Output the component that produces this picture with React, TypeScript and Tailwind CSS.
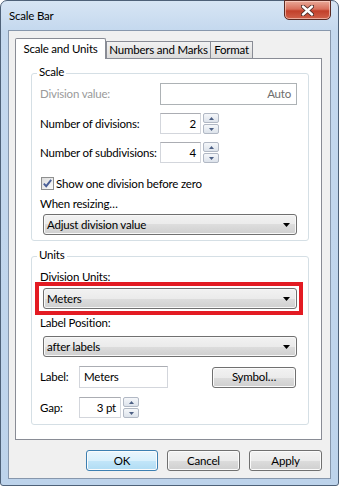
import React from "react";

const btnGrad =
  "bg-[linear-gradient(to_bottom,#f2f2f2_0%,#ebebeb_50%,#dddddd_50%,#cfcfcf_100%)]";

function Arrow() {
  return (
    <svg width="7" height="4" viewBox="0 0 7 4">
      <path d="M0 0 L7 0 L3.5 4 Z" fill="#000" />
    </svg>
  );
}

function Combo({ text }: { text: string }) {
  return (
    <div
      className={`h-[21px] w-[254px] rounded-[3px] border border-[#707070] ${btnGrad} shadow-[inset_0_0_0_1px_#f8f8f8] flex items-center justify-between pl-[3px] pr-[6px]`}
    >
      <span className="leading-[14px]">{text}</span>
      <Arrow />
    </div>
  );
}

function Spin() {
  const half =
    "h-[10px] w-[16px] border border-[#b1b8c4] rounded-[2px] bg-[linear-gradient(to_bottom,#f5f7fa,#dde3eb)] flex items-center justify-center";
  return (
    <div className="flex flex-col gap-[1px] ml-[2px] shrink-0">
      <div className={half}>
        <svg width="5" height="3" viewBox="0 0 5 3">
          <path d="M2.5 0 L5 3 L0 3 Z" fill="#4c5f84" />
        </svg>
      </div>
      <div className={half}>
        <svg width="5" height="3" viewBox="0 0 5 3">
          <path d="M0 0 L5 0 L2.5 3 Z" fill="#4c5f84" />
        </svg>
      </div>
    </div>
  );
}

const inputCls =
  "shrink-0 bg-white border border-[#d3d6dc] border-t-[#abadb3] flex items-center";

function Group({
  label,
  children,
}: {
  label: string;
  children: React.ReactNode;
}) {
  return (
    <div className="relative border border-[#d5dfe5] rounded-[3px] pl-[8px]">
      <span className="absolute -top-[9px] left-[5px] px-[2px] bg-white leading-[14px]">
        {label}
      </span>
      {children}
    </div>
  );
}

function Button({
  children,
  primary,
  w,
}: {
  children: React.ReactNode;
  primary?: boolean;
  w: string;
}) {
  const cls = primary
    ? "border-[#3c7fb1] bg-[linear-gradient(to_bottom,#eaf6fd_0%,#d9f0fc_50%,#c3e6f9_50%,#b0dcf4_100%)]"
    : `border-[#707070] ${btnGrad}`;
  return (
    <div
      className={`h-[21px] ${w} rounded-[3px] border ${cls} shadow-[inset_0_0_0_1px_#fbfbfb] flex items-center justify-center leading-[14px]`}
    >
      {children}
    </div>
  );
}

export default function App() {
  return (
    <div className="w-[339px] h-[486px] font-['Lato','Noto_Sans',sans-serif] text-[11.5px] tracking-[-0.2px] text-black whitespace-nowrap">
      <div className="w-[339px] h-[486px] flex flex-col border border-[#4e6178] rounded-t-[7px] rounded-b-[3px] bg-[linear-gradient(to_bottom,#d7e5f4_0px,#c4d8ee_30px,#bdd3eb_100%)] px-[7px] pb-[6px]">
        {/* title bar */}
        <div className="h-[29px] flex items-start justify-between">
          <div className="h-[29px] flex items-center pl-[1px] leading-[14px]">
            Scale Bar
          </div>
          <div className="-mt-px w-[47px] h-[20px] rounded-b-[5px] border border-[#5a2a22] bg-[linear-gradient(to_bottom,#e9a998_0%,#d8705c_45%,#c2402a_55%,#d0614a_100%)] shadow-[inset_0_0_0_1px_rgba(255,220,210,0.6)] flex items-center justify-center">
            <svg width="13" height="11" viewBox="0 0 13 11">
              <path
                d="M2 1.5 L11 9.5 M11 1.5 L2 9.5"
                stroke="#4a2a26"
                strokeWidth="4.2"
                strokeLinecap="round"
              />
              <path
                d="M2 1.5 L11 9.5 M11 1.5 L2 9.5"
                stroke="#ffffff"
                strokeWidth="2.4"
                strokeLinecap="round"
              />
            </svg>
          </div>
        </div>

        {/* client */}
        <div className="flex-1 border border-[#8797ac] bg-[#f0f0f0] pl-[6px] pr-[8px] pt-[7px] flex flex-col">
          {/* tabs */}
          <div className="relative z-10 h-[20px] flex items-end">
            <div className="-mb-px h-[21px] w-[91px] bg-white border border-b-0 border-[#898c95] rounded-t-[2px] flex items-center justify-center pb-[1px] leading-[14px]">
              Scale and Units
            </div>
            <div className="h-[17px] w-[105px] border border-b-0 border-[#898c95] bg-[linear-gradient(to_bottom,#f2f2f2,#dcdcdc)] flex items-center justify-center leading-[14px]">
              Numbers and Marks
            </div>
            <div className="-ml-px h-[17px] w-[43px] border border-b-0 border-[#898c95] bg-[linear-gradient(to_bottom,#f2f2f2,#dcdcdc)] flex items-center justify-center leading-[14px]">
              Format
            </div>
          </div>

          {/* panel */}
          <div className="h-[382px] w-[307px] bg-white border border-[#898c95] pl-[15px] pr-[12px] pt-[14px]">
            <Group label="Scale">
              <div className="mt-[9px] h-[22px] flex items-center">
                <span className="w-[120px] shrink-0 text-[#9a9a9a] leading-[14px]">
                  Division value:
                </span>
                <div className="shrink-0 h-[22px] w-[137px] bg-white border border-[#adb2b5] flex items-center justify-end pr-[5px] text-[#6d6d6d] leading-[14px]">
                  Auto
                </div>
              </div>
              <div className="mt-[8px] h-[21px] flex items-center">
                <span className="w-[120px] shrink-0 leading-[14px]">
                  Number of divisions:
                </span>
                <div
                  className={`${inputCls} h-[21px] w-[41px] justify-end pr-[4px] leading-[14px]`}
                >
                  2
                </div>
                <Spin />
              </div>
              <div className="mt-[8px] h-[21px] flex items-center">
                <span className="w-[120px] shrink-0 leading-[14px]">
                  Number of subdivisions:
                </span>
                <div
                  className={`${inputCls} h-[21px] w-[41px] justify-end pr-[4px] leading-[14px]`}
                >
                  4
                </div>
                <Spin />
              </div>
              <div className="mt-[14px] h-[13px] flex items-center">
                <div className="ml-[1px] w-[13px] h-[13px] border border-[#8e8f8f] bg-[linear-gradient(135deg,#dcdcdc,#fbfbfb)] flex items-center justify-center">
                  <svg width="11" height="11" viewBox="0 0 11 11">
                    <path
                      d="M1.8 5.6 L4.2 8.2 L9.2 1.8"
                      stroke="#4a5f97"
                      strokeWidth="1.9"
                      fill="none"
                    />
                  </svg>
                </div>
                <span className="ml-[2px] leading-[14px]">
                  Show one division before zero
                </span>
              </div>
              <div className="mt-[7px] h-[14px] leading-[14px]">
                When resizing…
              </div>
              <div className="mt-[3px] ml-[3px]">
                <Combo text="Adjust division value" />
              </div>
              <div className="h-[5px]" />
            </Group>

            <div className="mt-[15px]">
              <Group label="Units">
                <div className="mt-[13px] h-[14px] leading-[14px]">
                  Division Units:
                </div>
                <div className="mt-[4px] ml-[3px] relative w-[254px]">
                  <Combo text="Meters" />
                  <div className="absolute -left-[8px] -right-[6px] -top-[6px] -bottom-[6px] border-[4px] border-[#e31b23]" />
                </div>
                <div className="mt-[7px] h-[14px] leading-[14px]">
                  Label Position:
                </div>
                <div className="mt-[6px] ml-[3px]">
                  <Combo text="after labels" />
                </div>
                <div className="mt-[9px] h-[22px] flex items-center">
                  <span className="w-[39px] shrink-0 leading-[14px]">Label:</span>
                  <div
                    className={`${inputCls} h-[22px] w-[89px] pl-[4px] leading-[14px]`}
                  >
                    Meters
                  </div>
                  <div className="ml-[44px]">
                    <Button w="w-[84px]">Symbol…</Button>
                  </div>
                </div>
                <div className="mt-[9px] h-[21px] flex items-center">
                  <span className="w-[39px] shrink-0 leading-[14px]">Gap:</span>
                  <div
                    className={`${inputCls} h-[21px] w-[42px] justify-end pr-[4px] leading-[14px]`}
                  >
                    3 pt
                  </div>
                  <Spin />
                </div>
                <div className="h-[6px]" />
              </Group>
            </div>
          </div>

          {/* buttons */}
          <div className="mt-[10px] flex justify-end gap-[9px]">
            <Button primary w="w-[72px]">
              OK
            </Button>
            <Button w="w-[73px]">Cancel</Button>
            <Button w="w-[73px]">Apply</Button>
          </div>
        </div>
      </div>
    </div>
  );
}
